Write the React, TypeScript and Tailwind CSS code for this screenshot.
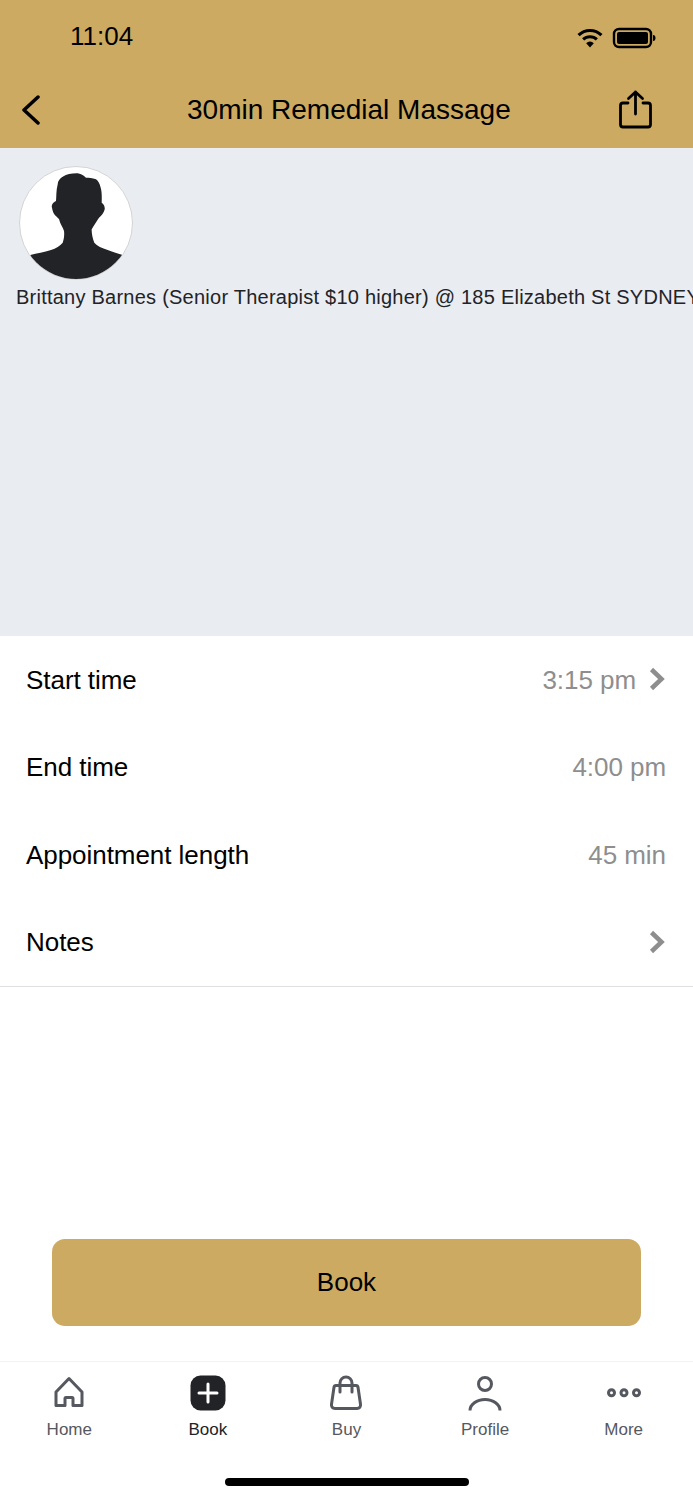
const font = { fontFamily: '"Liberation Sans", Arial, sans-serif' };

const rows = [
  { label: "Start time", value: "3:15 pm", chevron: true },
  { label: "End time", value: "4:00 pm", chevron: false },
  { label: "Appointment length", value: "45 min", chevron: false },
  { label: "Notes", value: "", chevron: true },
];

const Chevron = () => (
  <svg width="17" height="24" viewBox="0 0 17 24" className="ml-[13px] -mt-[1px]">
    <path d="M2.500 2.500l10 9.500-10 9.500" fill="none" stroke="#8e8e8e" strokeWidth="4.500" />
  </svg>
);

const tabs = [
  {
    label: "Home",
    active: false,
    icon: (
      <svg width="34" height="38" viewBox="0 0 34 38" fill="none" stroke="#565860" strokeWidth="3" strokeLinejoin="round">
        <path d="M17 3.500L4 17v13.500h9v-7a1 1 0 0 1 1-1h6a1 1 0 0 1 1 1v7h9V17z" />
      </svg>
    ),
  },
  {
    label: "Book",
    active: true,
    icon: (
      <svg width="36" height="38" viewBox="0 0 36 38">
        <rect x="0.500" y="0.500" width="35" height="35" rx="10" fill="#222327" />
        <path d="M18 9v18M9 18h18" stroke="#fff" strokeWidth="3" strokeLinecap="round" />
      </svg>
    ),
  },
  {
    label: "Buy",
    active: false,
    icon: (
      <svg width="34" height="38" viewBox="0 0 34 38" fill="none" stroke="#565860" strokeWidth="3" strokeLinecap="round">
        <path d="M7 10.500h20a2 2 0 0 1 2 1.700l2.500 17c.4 2.500-1 4.300-3.500 4.300H6c-2.500 0-3.900-1.800-3.500-4.300l2.500-17a2 2 0 0 1 2-1.700z" />
        <path d="M11 17V8a6 6 0 0 1 12 0v9" />
      </svg>
    ),
  },
  {
    label: "Profile",
    active: false,
    icon: (
      <svg width="34" height="38" viewBox="0 0 34 38" fill="none" stroke="#565860" strokeWidth="3">
        <circle cx="17" cy="9" r="6.500" />
        <path d="M2 35.500a15 11 0 0 1 30 0" />
      </svg>
    ),
  },
  {
    label: "More",
    active: false,
    icon: (
      <svg width="36" height="38" viewBox="0 0 36 38" fill="none" stroke="#565860" strokeWidth="3">
        <circle cx="5.500" cy="17.700" r="3" />
        <circle cx="18" cy="17.700" r="3" />
        <circle cx="30.500" cy="17.700" r="3" />
      </svg>
    ),
  },
];

export default function App() {
  return (
    <div className="w-[693px] h-[1500px] bg-white flex flex-col overflow-hidden text-black" style={font}>
      {/* status bar + nav */}
      <div className="h-[148px] bg-[#ccaa62] flex flex-col shrink-0">
        <div className="h-[72px] flex items-center justify-between pl-[70px] pr-[37px] pb-[1px]">
          <span className="text-[26px] leading-none">11:04</span>
          <div className="flex items-center gap-[9px] mt-[4px]">
            <svg width="26" height="20" viewBox="0 0 27 21">
              <path d="M1.500 7.500a17 17 0 0 1 24 0" fill="none" stroke="#000" strokeWidth="3.200" />
              <path d="M6.300 12a10.500 10.500 0 0 1 14.400 0" fill="none" stroke="#000" strokeWidth="3.200" />
              <path d="M13.500 20.500l-4-4.500a5.500 5.500 0 0 1 8 0z" fill="#000" />
            </svg>
            <svg width="44" height="22" viewBox="0 0 44 22">
              <rect x="2" y="2" width="37" height="18" rx="5" fill="none" stroke="#000" strokeWidth="2.400" />
              <rect x="5" y="5" width="31" height="12" rx="2" fill="#000" />
              <path d="M41 8c2 0 2.500 1.500 2.500 3S43 14 41 14z" fill="#000" />
            </svg>
          </div>
        </div>
        <div className="flex-1 flex items-center justify-between pl-[21px] pr-[41px] relative">
          <svg width="20" height="30" viewBox="0 0 20 30" fill="none" stroke="#000" strokeWidth="3.500" strokeLinecap="round" strokeLinejoin="round">
            <path d="M17 2L3 15l14 13" />
          </svg>
          <span className="absolute left-[187px] text-[28px] leading-none whitespace-nowrap">30min Remedial Massage</span>
          <svg width="33" height="39" viewBox="0 0 33 39" fill="none" stroke="#000" strokeWidth="2.800" strokeLinecap="round" strokeLinejoin="round" className="mb-[1px]">
            <path d="M9 13H4a2.500 2.500 0 0 0-2.500 2.500v19A2.500 2.500 0 0 0 4 37h25a2.500 2.500 0 0 0 2.500-2.500v-19A2.500 2.500 0 0 0 29 13h-5" />
            <path d="M16.500 24V2M9.500 8.500L16.500 2l7 6.500" />
          </svg>
        </div>
      </div>

      {/* therapist panel */}
      <div className="h-[488px] bg-[#e9ecf1] shrink-0 overflow-hidden pt-[18px]">
        <div className="ml-[19px] w-[114px] h-[114px] rounded-full bg-white border border-[#d4d4d4] overflow-hidden">
          <svg width="112" height="112" viewBox="0 0 112 112">
            <path
              d="M57.700 6.300C46 6 38 11 37.700 17.300C36 24 36.500 29 36 34C33 35.500 31 38 32 40.700C32.500 44 33.500 46 34.300 47.300C36 49.500 37.500 50.500 39 52C40 57 43 60 44 64C44.500 68 44 72 42.700 75.700C40 79 36 81.500 31 83C24 85.500 17 86 10.300 88L10 112H103L102.700 88C97 86 92 85 87.700 83C82 81 77 79 74.300 75.700C72.500 71 71.500 66 71.700 62.300C74 58 77 54 79 50.700C82 48.500 84 45.500 84.700 42.300C85 39 83.500 37 81.700 35.700C81.800 30 82 25 80.700 20.700C79.500 16 78 14 76 12.300C72 10.500 69 11 66 10.700C63 8 60 6.500 57.700 6.300z"
              fill="#222327"
            />
          </svg>
        </div>
        <p className="ml-[16px] mt-[5px] text-[20px] leading-[24px] text-[#222327] whitespace-nowrap tracking-[0.24px]">
          Brittany Barnes (Senior Therapist $10 higher) @ 185 Elizabeth St SYDNEY
        </p>
      </div>

      {/* details */}
      <div className="border-b border-[#dedfe2] h-[351px] shrink-0 flex flex-col">
        {rows.map((r) => (
          <div key={r.label} className="flex-1 flex items-center justify-between pl-[26px] pr-[27px]">
            <span className="text-[26px] leading-none tracking-[-0.05px]">{r.label}</span>
            <div className="flex items-center">
              <span className="text-[26px] leading-none tracking-[-0.05px] text-[#8e8e8e]">{r.value}</span>
              {r.chevron && <Chevron />}
            </div>
          </div>
        ))}
      </div>

      <div className="flex-1 flex items-end px-[52px] pb-[35px]">
        <button className="w-full h-[87px] rounded-[13px] bg-[#ccaa62] text-[26px] text-black">Book</button>
      </div>

      {/* tab bar */}
      <div className="h-[139px] shrink-0 border-t border-[#f2f2f3] flex flex-col">
        <div className="grid grid-cols-5 pt-[13px]">
          {tabs.map((t) => (
            <div key={t.label} className="flex flex-col items-center">
              <div className="h-[38px] flex items-center justify-center">{t.icon}</div>
              <span className={`mt-[7px] text-[17px] leading-[20px] ${t.active ? "text-[#222327]" : "text-[#565860]"}`}>
                {t.label}
              </span>
            </div>
          ))}
        </div>
        <div className="mt-auto mb-[14px] mx-auto w-[244px] h-[8px] rounded-full bg-black" />
      </div>
    </div>
  );
}
